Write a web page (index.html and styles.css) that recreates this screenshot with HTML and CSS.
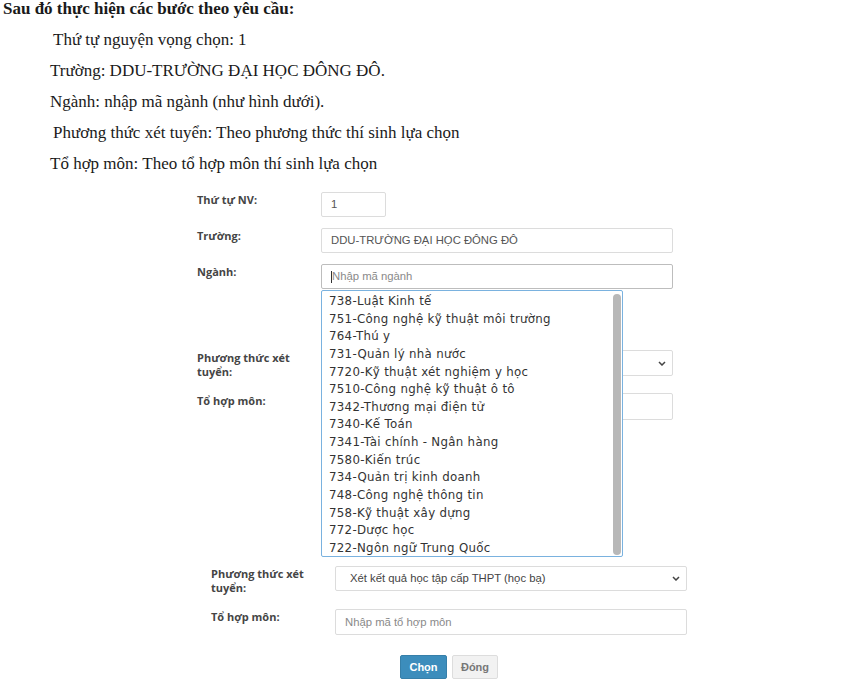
FILE: index.html
```html
<!DOCTYPE html>
<html>
<head>
  <title>Đăng ký nguyện vọng</title>
  <link rel="stylesheet" href="styles.css">
</head>
<body>
  <p class="lead">Sau đó thực hiện các bước theo yêu cầu:</p>
  <div class="steps">
    <p class="step shift">Thứ tự nguyện vọng chọn: 1</p>
    <p class="step">Trường: DDU-TRƯỜNG ĐẠI HỌC ĐÔNG ĐÔ.</p>
    <p class="step">Ngành: nhập mã ngành (như hình dưới).</p>
    <p class="step shift">Phương thức xét tuyển: Theo phương thức thí sinh lựa chọn</p>
    <p class="step">Tổ hợp môn: Theo tổ hợp môn thí sinh lựa chọn</p>
  </div>

  <!-- first screenshot: the form with the major list open -->
  <div class="form form-top">
    <div class="row">
      <div class="label">Thứ tự NV:</div>
      <div class="field"><div class="control control-short">1</div></div>
    </div>
    <div class="row">
      <div class="label">Trường:</div>
      <div class="field"><div class="control">DDU-TRƯỜNG ĐẠI HỌC ĐÔNG ĐÔ</div></div>
    </div>
    <div class="row">
      <div class="label">Ngành:</div>
      <div class="field">
        <div class="control control-focus"><span class="caret"></span><span class="placeholder">Nhập mã ngành</span></div>
        <div class="dropdown">
          <ul class="options">
            <li>738-Luật Kinh tế</li>
            <li>751-Công nghệ kỹ thuật môi trường</li>
            <li>764-Thú y</li>
            <li>731-Quản lý nhà nước</li>
            <li>7720-Kỹ thuật xét nghiệm y học</li>
            <li>7510-Công nghệ kỹ thuật ô tô</li>
            <li>7342-Thương mại điện tử</li>
            <li>7340-Kế Toán</li>
            <li>7341-Tài chính - Ngân hàng</li>
            <li>7580-Kiến trúc</li>
            <li>734-Quản trị kinh doanh</li>
            <li>748-Công nghệ thông tin</li>
            <li>758-Kỹ thuật xây dựng</li>
            <li>772-Dược học</li>
            <li>722-Ngôn ngữ Trung Quốc</li>
          </ul>
          <div class="scrollbar"><div class="thumb"></div></div>
        </div>
      </div>
    </div>
    <div class="row row-method">
      <div class="label">Phương thức xét tuyển:</div>
      <div class="field">
        <div class="control control-select select-tall">
          <span>Xét kết quả học tập cấp THPT (học bạ)</span>
          <svg class="chevron" width="8" height="5" viewBox="0 0 8 5"><path d="M1 1l3 3 3-3" fill="none" stroke="#444" stroke-width="1.5"/></svg>
        </div>
      </div>
    </div>
    <div class="row row-combo">
      <div class="label">Tổ hợp môn:</div>
      <div class="field"><div class="control control-tall"><span class="placeholder">Nhập mã tổ hợp môn</span></div></div>
    </div>
  </div>

  <!-- second screenshot: bottom of the same form -->
  <div class="form form-bottom">
    <div class="row">
      <div class="label">Phương thức xét tuyển:</div>
      <div class="field">
        <div class="control control-select">
          <span>Xét kết quả học tập cấp THPT (học bạ)</span>
          <svg class="chevron" width="8" height="5" viewBox="0 0 8 5"><path d="M1 1l3 3 3-3" fill="none" stroke="#444" stroke-width="1.5"/></svg>
        </div>
      </div>
    </div>
    <div class="row row-combo">
      <div class="label">Tổ hợp môn:</div>
      <div class="field"><div class="control control-mid"><span class="placeholder">Nhập mã tổ hợp môn</span></div></div>
    </div>
    <div class="actions">
      <button class="btn btn-primary">Chọn</button>
      <button class="btn btn-default">Đóng</button>
    </div>
  </div>
</body>
</html>
```

FILE: styles.css
```css
body {
  margin: 0;
  padding: 0 3px;
  background-color: #ffffff;
  color: #1a1a1a;
  font-family: "Liberation Serif", "Times New Roman", serif;
  font-size: 17px;
  overflow: hidden;
}

.lead {
  margin: 0 0 6px;
  font-weight: bold;
  line-height: 18px;
}

.steps {
  padding-left: 47px;
}

.step {
  margin: 0;
  line-height: 31px;
}

.step.shift {
  padding-left: 3px;
}

/* form screenshots */

.form {
  display: flex;
  flex-direction: column;
  font-family: "Liberation Sans", Arial, sans-serif;
}

.form-top {
  margin-left: 194px;
  padding-top: 13px;
  width: 476px;
}

.form-bottom {
  margin-left: 208px;
  margin-top: 146px;
  width: 476px;
}

.row {
  display: grid;
  grid-template-columns: 124px 352px;
}

.row + .row {
  margin-top: 11px;
}

.form-top .row-method {
  margin-top: 61px;
}

.row + .row-combo {
  margin-top: 14px;
}

.label {
  font-family: "Open Sans", sans-serif;
  font-size: 11px;
  font-weight: bold;
  line-height: 14px;
  color: #454545;
  padding-top: 1px;
  padding-right: 30px;
}

.field {
  position: relative;
}

.control {
  box-sizing: border-box;
  height: 25px;
  border: 1px solid #dcdcdc;
  border-radius: 2px;
  padding: 0 9px;
  font-size: 11.3px;
  line-height: 23px;
  color: #555;
  background-color: #fff;
  display: flex;
  align-items: center;
  white-space: nowrap;
}

.control-short {
  width: 65px;
}

.control-mid {
  height: 26px;
}

.control-tall {
  height: 27px;
}

.control-focus {
  border-color: #bdbdbd;
}

.caret {
  width: 1px;
  height: 12px;
  background-color: #333;
}

.placeholder {
  color: #8a8a8a;
}

.control-select {
  padding-left: 14px;
  padding-right: 6px;
  justify-content: space-between;
  color: #444;
}

.select-tall {
  height: 26px;
}

/* open dropdown over the form */

.dropdown {
  position: absolute;
  top: 100%;
  left: 0;
  margin-top: 1px;
  width: 302px;
  height: 267px;
  box-sizing: border-box;
  border: 1px solid #7ab2df;
  border-radius: 2px;
  background-color: #fff;
  display: flex;
  z-index: 2;
}

.options {
  flex: 1;
  list-style: none;
  margin: 0;
  padding: 2px 0 0 7px;
  overflow: hidden;
  font-family: "DejaVu Sans", Verdana, sans-serif;
  font-size: 11.8px;
  letter-spacing: 0.3px;
  line-height: 17.64px;
  color: #333;
}

.scrollbar {
  width: 8px;
  padding: 3px 1px 1px 0;
  display: flex;
}

.thumb {
  flex: 1;
  background-color: #b8b8b8;
  border-radius: 4px;
}

/* buttons */

.actions {
  display: flex;
  justify-content: center;
  gap: 5px;
  margin-top: 20px;
}

.btn {
  height: 24px;
  padding: 0;
  border-radius: 2px;
  font-family: "Liberation Sans", Arial, sans-serif;
  font-size: 11px;
  font-weight: bold;
  cursor: pointer;
}

.btn-primary {
  width: 47px;
  background-color: #3c8dbc;
  border: 1px solid #367fa9;
  color: #fff;
}

.btn-default {
  width: 46px;
  background-color: #f2f2f2;
  border: 1px solid #dddddd;
  color: #777;
}
```
